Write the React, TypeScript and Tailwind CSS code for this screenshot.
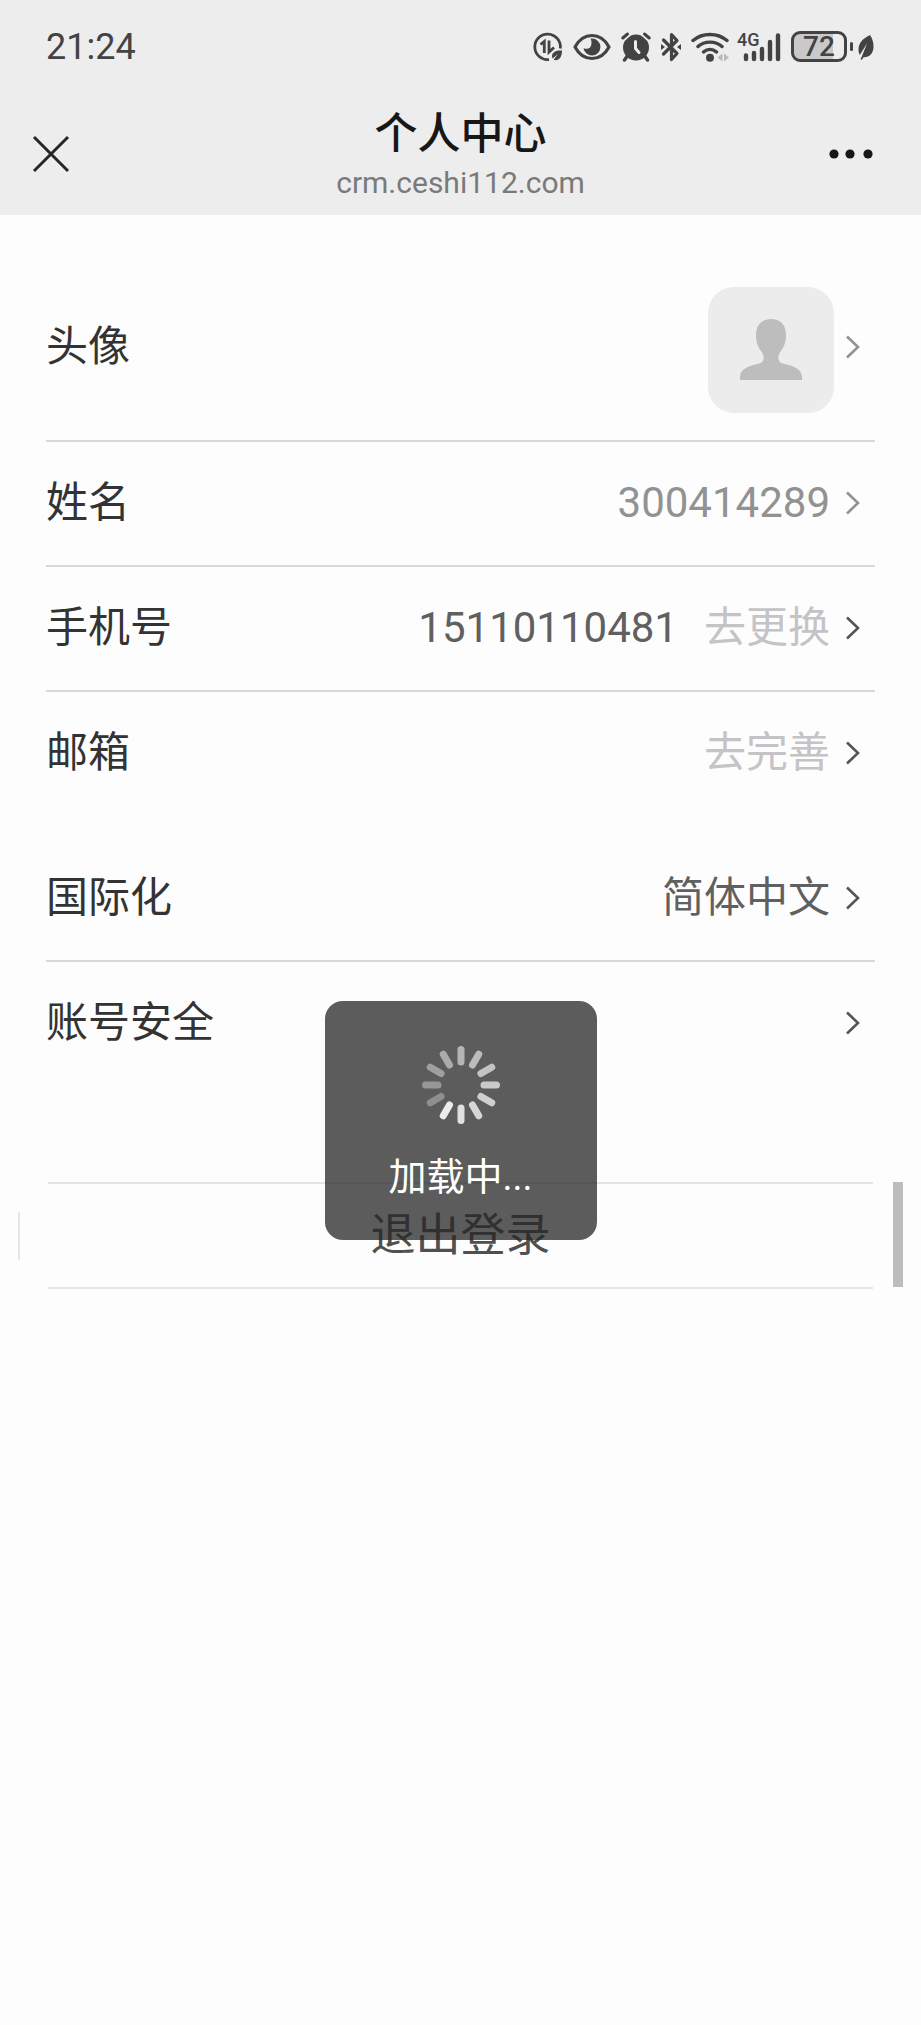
import type { ReactNode } from "react";

const spokes = [
  "#b5b5b5",
  "#bcbcbc",
  "#c3c3c3",
  "#cacaca",
  "#d0d0d0",
  "#d6d6d6",
  "#e0e0e0",
  "#ececec",
  "#8f8f8f",
  "#979797",
  "#a0a0a0",
  "#ababab",
];

function DataSaverIcon() {
  return (
    <svg width="30" height="30" viewBox="0 0 30 30" fill="none" stroke="#434343">
      <path d="M27.300 16.500A12.800 12.800 0 1 0 16 27.600" strokeWidth="2.800" />
      <path d="M7.500 12.500l3.800-3v11.500" strokeWidth="2.800" />
      <path d="M16 8.500v11.500l5-4.500" strokeWidth="2.800" />
      <path
        d="M29 18.500c-6-.3-10 1.700-10 5.500 0 1 .2 1.800.6 2.500l5.400-4.500-4.400 5.800c4.800 1.500 8.400-2 8.400-9.300z"
        fill="#434343"
        stroke="none"
      />
    </svg>
  );
}

function EyeIcon() {
  return (
    <svg width="38" height="28" viewBox="0 0 38 28" fill="none">
      <path
        d="M2 14C6 6.500 12 2.500 19 2.500S32 6.500 36 14c-4 7.500-10 11.500-17 11.500S6 21.500 2 14z"
        stroke="#434343"
        strokeWidth="3.200"
        strokeLinejoin="round"
      />
      <path
        d="M19 5.500a8.500 8.500 0 1 1-8.500 9.500c2.500 1.500 5.500 1 7-1.200 1.700-2.500 1-5.800.2-8.200z"
        fill="#434343"
      />
    </svg>
  );
}

function AlarmIcon() {
  return (
    <svg width="30" height="30" viewBox="0 0 30 30" fill="none" strokeLinecap="round">
      <circle cx="15" cy="15.500" r="13" fill="#434343" />
      <path d="M1.800 6.500L7 2M28.200 6.500L23 2" stroke="#ededed" strokeWidth="6" />
      <path d="M1.800 6L6.500 2M28.200 6L23.500 2" stroke="#434343" strokeWidth="3" />
      <path d="M6 24.500l-2.500 3.500M24 24.500l2.500 3.500" stroke="#434343" strokeWidth="3.400" />
      <path d="M14.500 9.500v7l3.500 4" stroke="#ededed" strokeWidth="3" />
    </svg>
  );
}

function BluetoothIcon() {
  return (
    <svg width="20" height="30" viewBox="0 0 20 30" fill="none" stroke="#434343">
      <path
        d="M2.500 8l13.500 13.500-5.500 6v-25L16 8.500 2.500 22"
        strokeWidth="3.200"
        strokeLinejoin="round"
        strokeLinecap="round"
      />
      <path d="M0 12l4 3-4 3zM20 12l-4 3 4 3z" fill="#434343" stroke="none" />
    </svg>
  );
}

function WifiIcon() {
  return (
    <svg width="38" height="30" viewBox="0 0 38 30" fill="none" strokeLinecap="round">
      <path
        d="M2 8.500C11.500.5 26.500.5 36 8.500M7 14.500c6.500-5.800 17.500-5.800 24 0M12.500 20c4-3.500 9-3.500 13 0"
        stroke="#434343"
        strokeWidth="3.400"
      />
      <circle cx="19" cy="25.800" r="4" fill="#434343" />
      <path d="M31.500 21.500v8l-5-4zM33 21.500v8l5-4z" fill="#b9b9b9" />
    </svg>
  );
}

function SignalIcon() {
  return (
    <div className="relative h-[30px] w-[42px]">
      <svg width="42" height="30" viewBox="0 0 42 30" stroke="#434343" strokeWidth="4.400" strokeLinecap="round">
        <path d="M7 23.500v3.500M15 21v6M23 17v10M31 10v17M39 3.500v23.500" />
      </svg>
      <span className="absolute -top-px -left-0.5 text-[18px] leading-[18px] font-medium">4G</span>
    </div>
  );
}

function Battery() {
  return (
    <div className="flex items-center gap-[3px]">
      <div className="flex h-[31px] w-[56px] items-center justify-center rounded-[9px] border-[3px] border-[#434343] bg-[linear-gradient(to_right,#c9c9c9_78%,#ededed_78%)] text-[28px] leading-[26px] font-medium">
        72
      </div>
      <div className="h-[9px] w-[3px] rounded-full bg-[#434343]" />
    </div>
  );
}

function LeafIcon() {
  return (
    <svg width="16" height="26" viewBox="0 0 16 26">
      <path
        d="M12 1C4.500 4.500.5 9.500.5 15.500c0 2.200.5 4 1.300 5.500L9 9.500 3.800 22.500l-1.300 2.800 1.500.5 1.500-2.500c6.500.2 10-4.300 10-10.800C15.500 8 14.200 4 12 1z"
        fill="#434343"
      />
    </svg>
  );
}

function StatusBar() {
  return (
    <div className="flex h-[93px] items-center justify-between pr-[47px] pl-[46px] text-[#434343]">
      <span className="text-[36px] leading-[42px]">21:24</span>
      <div className="flex items-center gap-2.5">
        <DataSaverIcon />
        <EyeIcon />
        <AlarmIcon />
        <BluetoothIcon />
        <WifiIcon />
        <SignalIcon />
        <div className="flex items-center gap-[5px]">
          <Battery />
          <LeafIcon />
        </div>
      </div>
    </div>
  );
}

function TitleBar() {
  return (
    <header className="flex h-[122px] items-center justify-between px-[32px]">
      <button type="button" aria-label="关闭" className="w-[60px]">
        <svg width="38" height="38" viewBox="0 0 38 38" fill="none" stroke="#262626" strokeWidth="3">
          <path d="M2 2l34 34M36 2L2 36" />
        </svg>
      </button>
      <div className="flex flex-col items-center pt-1.5">
        <h1 className="text-[43px] leading-[52px] font-medium text-[#171717]">个人中心</h1>
        <span className="text-[30px] leading-[46px] text-[#7a7a7a]">crm.ceshi112.com</span>
      </div>
      <button type="button" aria-label="更多" className="flex w-[60px]">
        <svg width="48" height="12" viewBox="0 0 48 12" fill="#171717">
          <circle cx="5" cy="6" r="4.600" />
          <circle cx="21" cy="6" r="4.600" />
          <circle cx="39" cy="6" r="4.600" />
        </svg>
      </button>
    </header>
  );
}

interface RowProps {
  label: string;
  children?: ReactNode;
  muted?: boolean;
  tall?: boolean;
  last?: boolean;
}

function Row({ label, children, muted, tall, last }: RowProps) {
  return (
    <button
      type="button"
      className={`flex w-full items-center border-b-2 pr-[15px] text-left text-[42px] leading-[60px] ${
        tall ? "h-[188px]" : "h-[125px] pb-0.5"
      } ${last ? "border-transparent" : "border-[#d9d9d9]"}`}
    >
      <span className="flex-1 text-[#333]">{label}</span>
      {children}
      <svg
        width="14"
        height="24"
        viewBox="0 0 14 24"
        fill="none"
        stroke={muted ? "#929292" : "#555"}
        strokeWidth="2.600"
        className="ml-4"
      >
        <path d="M1 1.500L12 12 1 22.500" />
      </svg>
    </button>
  );
}

function Avatar() {
  return (
    <span className="-mr-1 mt-1.5 flex size-[126px] items-center justify-center rounded-[26px] bg-[#ececec]">
      <svg width="62" height="62" viewBox="0 0 62 62" fill="#bdbdbd">
        <path d="M31 0c9 0 15 5.500 15 16 0 7-2 12-5 16-2.500 3.200-3 5.500-2.500 8 .6 3 2 4 6 5C54 47 62 50.500 62 58v3H0v-3c0-7.500 8-11 17.500-13 4-1 5.400-2 6-5 .5-2.500 0-4.800-2.500-8-3-4-5-9-5-16C16 5.500 22 0 31 0z" />
      </svg>
    </span>
  );
}

function LoadingToast() {
  return (
    <div className="pointer-events-none absolute inset-0 flex items-center justify-center">
      <div
        role="status"
        className="flex h-[239px] w-[272px] flex-col items-center rounded-[18px] bg-[#262626]/75 pt-[44px]"
      >
        <svg width="80" height="80" viewBox="-40 -40 80 80" strokeWidth="7" strokeLinecap="round">
          {spokes.map((color, i) => (
            <path key={i} d="M0 -35.500V-23" stroke={color} transform={`rotate(${i * 30})`} />
          ))}
        </svg>
        <span className="mt-[22px] text-[38px] leading-[60px] text-white">加载中...</span>
      </div>
    </div>
  );
}

export default function App() {
  return (
    <div className="flex min-h-screen flex-col bg-[#fdfdfd] font-[Roboto,'Noto_Sans_CJK_SC',sans-serif]">
      <div className="bg-[#ededed]">
        <StatusBar />
        <TitleBar />
      </div>

      <main className="relative flex-1 pt-[39px]">
        <div className="px-[46px]">
          <Row label="头像" muted tall>
            <Avatar />
          </Row>
          <Row label="姓名" muted>
            <span className="text-[#929292]">300414289</span>
          </Row>
          <Row label="手机号">
            <span className="text-[#606060]">15110110481</span>
            <span className="ml-[26px] text-[#c4c4c6]">去更换</span>
          </Row>
          <Row label="邮箱" last>
            <span className="text-[#c4c4c6]">去完善</span>
          </Row>
        </div>

        <div className="mt-5 px-[46px]">
          <Row label="国际化">
            <span className="text-[#606060]">简体中文</span>
          </Row>
          <Row label="账号安全" last />
        </div>

        {/* Logout */}
        <div className="mt-[95px] flex items-center px-[18px]">
          <div className="h-[48px] w-[2px] rounded-full bg-[#e6e6e6]" />
          <button
            type="button"
            className="mr-5 ml-7 h-[107px] flex-1 border-y-2 border-[#e4e4e4] text-[45px] leading-[60px] text-[#505050]"
          >
            退出登录
          </button>
          <div className="h-[105px] w-[10px] self-start bg-[#bdbdbd]" />
        </div>

        <LoadingToast />
      </main>
    </div>
  );
}
